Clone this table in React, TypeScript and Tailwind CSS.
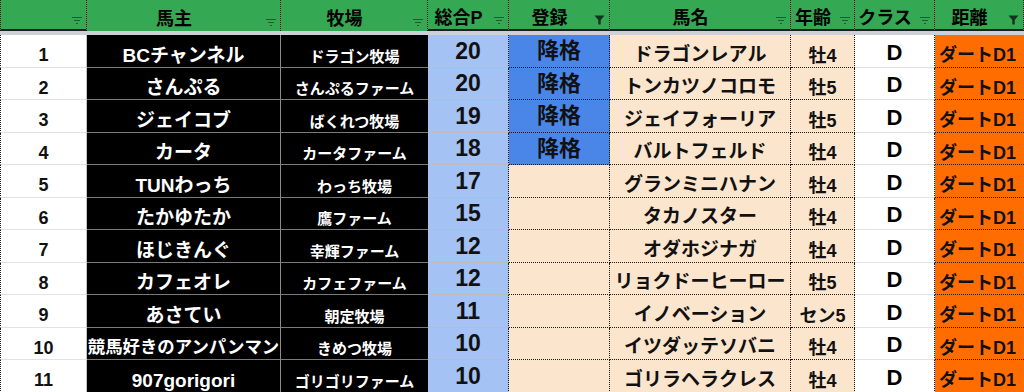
import React from 'react';

interface Row {
  no: number;
  owner: string;
  ranch: string;
  points: number;
  demoted: boolean;
  horse: string;
  age: string;
  longOwner?: boolean;
}

const rows: Row[] = [
  { no: 1, owner: 'BCチャンネル', ranch: 'ドラゴン牧場', points: 20, demoted: true, horse: 'ドラゴンレアル', age: '牡4' },
  { no: 2, owner: 'さんぷる', ranch: 'さんぷるファーム', points: 20, demoted: true, horse: 'トンカツノコロモ', age: '牡5' },
  { no: 3, owner: 'ジェイコブ', ranch: 'ばくれつ牧場', points: 19, demoted: true, horse: 'ジェイフォーリア', age: '牡5' },
  { no: 4, owner: 'カータ', ranch: 'カータファーム', points: 18, demoted: true, horse: 'バルトフェルド', age: '牡4' },
  { no: 5, owner: 'TUNわっち', ranch: 'わっち牧場', points: 17, demoted: false, horse: 'グランミニハナン', age: '牡4' },
  { no: 6, owner: 'たかゆたか', ranch: '鷹ファーム', points: 15, demoted: false, horse: 'タカノスター', age: '牡4' },
  { no: 7, owner: 'ほじきんぐ', ranch: '幸輝ファーム', points: 12, demoted: false, horse: 'オダホジナガ', age: '牡4' },
  { no: 8, owner: 'カフェオレ', ranch: 'カフェファーム', points: 12, demoted: false, horse: 'リョクドーヒーロー', age: '牡5' },
  { no: 9, owner: 'あさてい', ranch: '朝定牧場', points: 11, demoted: false, horse: 'イノベーション', age: 'セン5' },
  { no: 10, owner: '競馬好きのアンパンマン', ranch: 'きめつ牧場', points: 10, demoted: false, horse: 'イツダッテソバニ', age: '牡4', longOwner: true },
  { no: 11, owner: '907gorigori', ranch: 'ゴリゴリファーム', points: 10, demoted: false, horse: 'ゴリラヘラクレス', age: '牡4' },
];

const cols = 'grid grid-cols-[87px_194px_147px_81px_101px_181px_64px_80px_89px]';

const FilterIcon = () => (
  <svg width="12" height="9" viewBox="0 0 12 9">
    <path d="M1 1.5h10M3 4.5h6M5 7.5h2" stroke="#1d5a30" strokeWidth="1.2" />
  </svg>
);

const ActiveFilterIcon = () => (
  <svg width="11" height="10" viewBox="0 0 11 10">
    <path d="M0.5 0.5h10L6.7 5v4.5H4.3V5z" fill="#14331c" />
  </svg>
);

const HeaderCell = ({ label, active, className }: { label?: string; active?: boolean; className: string }) => (
  <div className={`flex bg-[#34a853] [border-right:1px_dotted_#1a1a1a] ${className}`}>
    <div className="flex flex-1 items-center justify-center pt-[6px] text-[18px] font-bold leading-none text-black whitespace-nowrap">
      {label}
    </div>
    <div className="flex w-[19px] items-end justify-center pb-[4px]">
      {active ? <ActiveFilterIcon /> : <FilterIcon />}
    </div>
  </div>
);

const App: React.FC = () => {
  return (
    <div className="h-[392px] w-[1024px] overflow-hidden bg-white font-['Liberation_Sans','Noto_Sans_CJK_JP',sans-serif]">
      <div className={`${cols} h-[31px]`}>
        <HeaderCell className="[border-left:1px_dotted_#1a1a1a] [border-bottom:2px_solid_#1e1e1e]" />
        <HeaderCell label="馬主" className="" />
        <HeaderCell label="牧場" className="" />
        <HeaderCell label="総合P" className="[border-bottom:2px_solid_#1e1e1e]" />
        <HeaderCell label="登録" active className="[border-bottom:2px_solid_#1e1e1e]" />
        <HeaderCell label="馬名" className="[border-bottom:2px_solid_#1e1e1e]" />
        <HeaderCell label="年齢" className="[border-bottom:2px_solid_#1e1e1e]" />
        <HeaderCell label="クラス" className="[border-bottom:2px_solid_#1e1e1e]" />
        <HeaderCell label="距離" active className="[border-bottom:2px_solid_#1e1e1e]" />
      </div>
      <div className="h-[4px] bg-[#cdd1d7]" />

      {rows.map((r, i) => (
        <div key={r.no} className={`${cols} ${i % 2 === 0 ? 'h-[33px]' : 'h-[32px]'} font-bold leading-none whitespace-nowrap`}>
          <div className="flex items-center justify-center bg-white pt-[8px] text-[18px] text-[#111] [border-left:1px_dotted_#1a1a1a] [border-right:1px_solid_#c4c4c4] [border-bottom:1px_solid_#e2e2e2]">
            {r.no}
          </div>
          <div className={`flex items-center justify-center overflow-hidden bg-black pt-[8px] text-white [border-right:1px_solid_#8c8c8c] [border-bottom:1px_solid_#7a7a7a] ${r.longOwner ? 'text-[17.4px]' : 'text-[19px]'}`}>
            {r.owner}
          </div>
          <div className="flex items-center justify-center overflow-hidden bg-black pt-[10px] text-[15px] text-white [border-bottom:1px_solid_#7a7a7a]">
            {r.ranch}
          </div>
          <div className="flex items-center justify-center bg-[#a4c2f4] text-[23px] text-[#111] [border-right:1px_dotted_#1a1a1a] [border-bottom:1px_solid_#bcbcbc]">
            {r.points}
          </div>
          <div className={`flex items-center justify-center text-[22px] text-[#111] [border-right:1px_dotted_#1a1a1a] [border-bottom:1px_dotted_#1a1a1a] ${r.demoted ? 'bg-[#4a86e8]' : 'bg-[#fce5cd]'}`}>
            {r.demoted ? '降格' : ''}
          </div>
          <div className="flex items-center justify-center overflow-hidden bg-[#fce5cd] pt-[6px] text-[19px] text-[#111] [border-right:1px_dotted_#1a1a1a] [border-bottom:1px_dotted_#1a1a1a]">
            {r.horse}
          </div>
          <div className="flex items-center justify-center bg-[#fce5cd] pt-[9px] text-[18px] text-[#111] [border-right:1px_dotted_#1a1a1a] [border-bottom:1px_dotted_#1a1a1a]">
            {r.age}
          </div>
          <div className="flex items-center justify-center bg-white pt-[3px] text-[22px] text-black [border-right:1px_dotted_#1a1a1a] [border-bottom:1px_solid_#e2e2e2]">
            D
          </div>
          <div className="flex items-center overflow-hidden bg-[#ff6d01] pl-[4px] pt-[8px] text-[18px] text-[#111] [border-bottom:1px_dotted_#1a1a1a]">
            ダートD1
          </div>
        </div>
      ))}
    </div>
  );
};

export default App;
